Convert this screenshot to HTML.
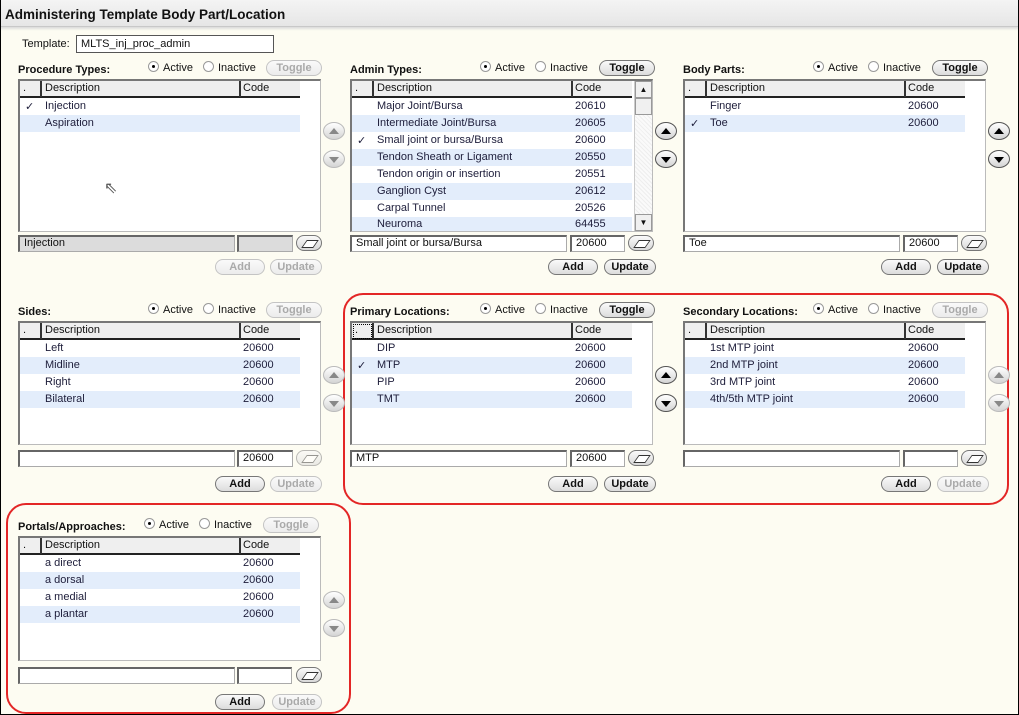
<!DOCTYPE html><html><head><style>
*{box-sizing:border-box;margin:0;padding:0}
body{width:1019px;height:715px;background:#fdfcf2;font-family:"Liberation Sans",sans-serif;font-size:11px;color:#111;position:relative;overflow:hidden}
.frame{position:absolute;left:0;top:0;width:1019px;height:715px;border:1px solid #000;border-top:none}
.tb{position:absolute;left:0;top:0;width:1019px;height:27px;background:linear-gradient(#f4f4f4,#e6e6e6);border-bottom:1px solid #c8c8c8;box-shadow:0 2px 2px #ddd;font-weight:bold;font-size:13.5px;padding:7px 5px;border-right:1px solid #000}
.a{position:absolute}
.p{position:absolute}
.lbl{position:absolute;top:-15px;left:0;font-weight:bold;font-size:11px;white-space:nowrap}
.rad{position:absolute;top:-18px;font-size:11px;white-space:nowrap}
.rad i{display:inline-block;width:11px;height:11px;border-radius:50%;border:1px solid #999;background:#fff;vertical-align:-1px;margin-right:4px;position:relative}
.rad i.on:after{content:"";position:absolute;left:3px;top:3px;width:3px;height:3px;border-radius:50%;background:#000}
.btn{position:absolute;height:16px;border:1px solid #777;border-radius:8px;background:linear-gradient(#fafafa,#dcdcdc);font-weight:bold;font-size:11px;text-align:center;line-height:14px;color:#111}
.btn.d{border-color:#c4c4c4;color:#aaa;background:linear-gradient(#fafafa,#ececec)}
.list{position:absolute;left:0;top:0;width:303px;background:#fff;border:1px solid #bbb;border-left:2px solid #777;border-top:2px solid #777}
.hd{position:absolute;left:0;top:0;height:17px;width:280px;background:#efefef;border-bottom:2px solid #222}
.hd span{position:absolute;top:1px;font-size:11px}
.hd b{position:absolute;top:0;width:2px;height:16px;background:#333}
.row{position:absolute;left:0;height:17px;width:280px;font-size:11px;color:#1d1d3a}
.row.z{background:#e3edfb}
.row span{position:absolute;top:2px}
.inp{position:absolute;height:17px;background:#fff;border:1px solid #aaa;border-left:2px solid #666;border-top:2px solid #666;font-size:11px;padding-left:4px;line-height:13px}
.inp.g{background:#dcdcdc}
.er{position:absolute;width:26px;height:16px;border:1px solid #777;border-radius:8px;background:linear-gradient(#fafafa,#d8d8d8)}
.er:after{content:"";position:absolute;left:7px;top:4px;width:10px;height:6px;border:1px solid #333;transform:skewX(-35deg);background:#fff}
.ar{position:absolute;width:22px;height:18px;border:1px solid #555;border-radius:50%;background:linear-gradient(#fff,#d4d4d4)}
.ar.d{border-color:#bbb}
.ar:after{content:"";position:absolute;left:5px;width:0;height:0;border-left:5px solid transparent;border-right:5px solid transparent}
.ar.u:after{top:5px;border-bottom:6px solid #000}
.ar.w:after{top:6px;border-top:6px solid #000}
.ar.d.u:after{border-bottom-color:#888}.ar.d.w:after{border-top-color:#888}
.red{position:absolute;border:2.5px solid #e32626;border-radius:20px}
</style></head><body>
<div class="tb">Administering Template Body Part/Location</div>
<div class="frame"></div>
<div class="a" style="left:22px;top:38px">Template:</div>
<div class="inp" style="left:76px;top:35px;width:198px;height:18px;border:1px solid #555;padding-top:2px">MLTS_inj_proc_admin</div>

<div class="red" style="left:343px;top:293px;width:666px;height:212px"></div>
<div class="red" style="left:6px;top:503px;width:345px;height:211px"></div>

<!-- Procedure Types -->
<div class="p" style="left:18px;top:79px">
<div class="lbl">Procedure Types:</div>
<div class="rad" style="left:130px"><i class="on"></i>Active</div><div class="rad" style="left:185px"><i></i>Inactive</div>
<div class="btn d" style="left:248px;top:-19px;width:56px">Toggle</div>
<div class="list" style="height:153px">
<div class="hd"><span style="left:3px">.</span><b style="left:20px"></b><span style="left:25px">Description</span><b style="left:219px"></b><span style="left:223px">Code</span></div>
<div class="row" style="top:17px"><span style="left:5px">✓</span><span style="left:25px">Injection</span></div>
<div class="row z" style="top:34px"><span style="left:25px">Aspiration</span></div>
</div>
<div class="inp g" style="left:0;top:156px;width:217px">Injection</div>
<div class="inp g" style="left:219px;top:156px;width:56px"></div>
<div class="er" style="left:278px;top:156px"></div>
<div class="btn d" style="left:197px;top:180px;width:50px">Add</div>
<div class="btn d" style="left:252px;top:180px;width:52px">Update</div>
<div class="ar d u" style="left:305px;top:43px"></div><div class="ar d w" style="left:305px;top:71px"></div>
</div>
<div class="a" style="left:104px;top:178px;font-size:16px;color:#555">⇖</div>

<!-- Admin Types -->
<div class="p" style="left:350px;top:79px">
<div class="lbl">Admin Types:</div>
<div class="rad" style="left:130px"><i class="on"></i>Active</div><div class="rad" style="left:185px"><i></i>Inactive</div>
<div class="btn" style="left:249px;top:-19px;width:56px">Toggle</div>
<div class="list" style="height:153px">
<div class="hd"><span style="left:3px">.</span><b style="left:20px"></b><span style="left:25px">Description</span><b style="left:219px"></b><span style="left:223px">Code</span></div>
<div class="row" style="top:17px"><span style="left:25px">Major Joint/Bursa</span><span style="left:223px">20610</span></div>
<div class="row z" style="top:34px"><span style="left:25px">Intermediate Joint/Bursa</span><span style="left:223px">20605</span></div>
<div class="row" style="top:51px"><span style="left:5px">✓</span><span style="left:25px">Small joint or bursa/Bursa</span><span style="left:223px">20600</span></div>
<div class="row z" style="top:68px"><span style="left:25px">Tendon Sheath or Ligament</span><span style="left:223px">20550</span></div>
<div class="row" style="top:85px"><span style="left:25px">Tendon origin or insertion</span><span style="left:223px">20551</span></div>
<div class="row z" style="top:102px"><span style="left:25px">Ganglion Cyst</span><span style="left:223px">20612</span></div>
<div class="row" style="top:119px"><span style="left:25px">Carpal Tunnel</span><span style="left:223px">20526</span></div>
<div class="row z" style="top:136px;height:14px;overflow:hidden"><span style="left:25px;top:1px">Neuroma</span><span style="left:223px;top:1px">64455</span></div>
<div class="a" style="left:282px;top:0;width:18px;height:150px;background:repeating-linear-gradient(45deg,#eee 0 1px,#fafafa 1px 3px);border-left:1px solid #ccc"></div>
<div class="a" style="left:283px;top:0;width:17px;height:17px;background:#f0f0f0;border:1px solid #999;text-align:center;font-size:8px;line-height:15px">▲</div>
<div class="a" style="left:283px;top:17px;width:17px;height:17px;background:#f0f0f0;border:1px solid #999"></div>
<div class="a" style="left:283px;top:133px;width:17px;height:17px;background:#f0f0f0;border:1px solid #999;text-align:center;font-size:8px;line-height:15px">▼</div>
</div>
<div class="inp" style="left:0;top:156px;width:217px">Small joint or bursa/Bursa</div>
<div class="inp" style="left:220px;top:156px;width:55px">20600</div>
<div class="er" style="left:278px;top:156px"></div>
<div class="btn" style="left:198px;top:180px;width:50px">Add</div>
<div class="btn" style="left:254px;top:180px;width:52px">Update</div>
<div class="ar u" style="left:305px;top:43px"></div><div class="ar w" style="left:305px;top:71px"></div>
</div>

<!-- Body Parts -->
<div class="p" style="left:683px;top:79px">
<div class="lbl">Body Parts:</div>
<div class="rad" style="left:130px"><i class="on"></i>Active</div><div class="rad" style="left:185px"><i></i>Inactive</div>
<div class="btn" style="left:249px;top:-19px;width:56px">Toggle</div>
<div class="list" style="height:153px">
<div class="hd"><span style="left:3px">.</span><b style="left:20px"></b><span style="left:25px">Description</span><b style="left:219px"></b><span style="left:223px">Code</span></div>
<div class="row" style="top:17px"><span style="left:25px">Finger</span><span style="left:223px">20600</span></div>
<div class="row z" style="top:34px"><span style="left:5px">✓</span><span style="left:25px">Toe</span><span style="left:223px">20600</span></div>
</div>
<div class="inp" style="left:0;top:156px;width:217px">Toe</div>
<div class="inp" style="left:220px;top:156px;width:55px">20600</div>
<div class="er" style="left:278px;top:156px"></div>
<div class="btn" style="left:198px;top:180px;width:50px">Add</div>
<div class="btn" style="left:254px;top:180px;width:52px">Update</div>
<div class="ar u" style="left:305px;top:43px"></div><div class="ar w" style="left:305px;top:71px"></div>
</div>

<!-- Sides -->
<div class="p" style="left:18px;top:321px">
<div class="lbl">Sides:</div>
<div class="rad" style="left:130px"><i class="on"></i>Active</div><div class="rad" style="left:185px"><i></i>Inactive</div>
<div class="btn d" style="left:248px;top:-19px;width:56px">Toggle</div>
<div class="list" style="height:124px">
<div class="hd"><span style="left:3px">.</span><b style="left:20px"></b><span style="left:25px">Description</span><b style="left:219px"></b><span style="left:223px">Code</span></div>
<div class="row" style="top:17px"><span style="left:25px">Left</span><span style="left:223px">20600</span></div>
<div class="row z" style="top:34px"><span style="left:25px">Midline</span><span style="left:223px">20600</span></div>
<div class="row" style="top:51px"><span style="left:25px">Right</span><span style="left:223px">20600</span></div>
<div class="row z" style="top:68px"><span style="left:25px">Bilateral</span><span style="left:223px">20600</span></div>
</div>
<div class="inp" style="left:0;top:129px;width:217px"></div>
<div class="inp" style="left:219px;top:129px;width:56px">20600</div>
<div class="er" style="left:278px;top:129px;opacity:.5"></div>
<div class="btn" style="left:197px;top:155px;width:50px">Add</div>
<div class="btn d" style="left:252px;top:155px;width:52px">Update</div>
<div class="ar d u" style="left:305px;top:45px"></div><div class="ar d w" style="left:305px;top:73px"></div>
</div>

<!-- Primary -->
<div class="p" style="left:350px;top:321px">
<div class="lbl">Primary Locations:</div>
<div class="rad" style="left:130px"><i class="on"></i>Active</div><div class="rad" style="left:185px"><i></i>Inactive</div>
<div class="btn" style="left:249px;top:-19px;width:56px">Toggle</div>
<div class="list" style="height:124px">
<div class="hd"><span style="left:3px">.</span><b style="left:20px"></b><span style="left:25px">Description</span><b style="left:219px"></b><span style="left:223px">Code</span><i style="position:absolute;left:1px;top:1px;width:19px;height:15px;border:1px dotted #000"></i></div>
<div class="row" style="top:17px"><span style="left:25px">DIP</span><span style="left:223px">20600</span></div>
<div class="row z" style="top:34px"><span style="left:5px">✓</span><span style="left:25px">MTP</span><span style="left:223px">20600</span></div>
<div class="row" style="top:51px"><span style="left:25px">PIP</span><span style="left:223px">20600</span></div>
<div class="row z" style="top:68px"><span style="left:25px">TMT</span><span style="left:223px">20600</span></div>
</div>
<div class="inp" style="left:0;top:129px;width:217px">MTP</div>
<div class="inp" style="left:220px;top:129px;width:55px">20600</div>
<div class="er" style="left:278px;top:129px"></div>
<div class="btn" style="left:198px;top:155px;width:50px">Add</div>
<div class="btn" style="left:254px;top:155px;width:52px">Update</div>
<div class="ar u" style="left:305px;top:45px"></div><div class="ar w" style="left:305px;top:73px"></div>
</div>

<!-- Secondary -->
<div class="p" style="left:683px;top:321px">
<div class="lbl">Secondary Locations:</div>
<div class="rad" style="left:130px"><i class="on"></i>Active</div><div class="rad" style="left:185px"><i></i>Inactive</div>
<div class="btn d" style="left:249px;top:-19px;width:56px">Toggle</div>
<div class="list" style="height:124px">
<div class="hd"><span style="left:3px">.</span><b style="left:20px"></b><span style="left:25px">Description</span><b style="left:219px"></b><span style="left:223px">Code</span></div>
<div class="row" style="top:17px"><span style="left:25px">1st MTP joint</span><span style="left:223px">20600</span></div>
<div class="row z" style="top:34px"><span style="left:25px">2nd MTP joint</span><span style="left:223px">20600</span></div>
<div class="row" style="top:51px"><span style="left:25px">3rd MTP joint</span><span style="left:223px">20600</span></div>
<div class="row z" style="top:68px"><span style="left:25px">4th/5th MTP joint</span><span style="left:223px">20600</span></div>
</div>
<div class="inp" style="left:0;top:129px;width:217px"></div>
<div class="inp" style="left:220px;top:129px;width:55px"></div>
<div class="er" style="left:278px;top:129px"></div>
<div class="btn" style="left:198px;top:155px;width:50px">Add</div>
<div class="btn d" style="left:254px;top:155px;width:52px">Update</div>
<div class="ar d u" style="left:305px;top:45px"></div><div class="ar d w" style="left:305px;top:73px"></div>
</div>

<!-- Portals -->
<div class="p" style="left:18px;top:536px">
<div class="lbl">Portals/Approaches:</div>
<div class="rad" style="left:126px"><i class="on"></i>Active</div><div class="rad" style="left:181px"><i></i>Inactive</div>
<div class="btn d" style="left:245px;top:-19px;width:56px">Toggle</div>
<div class="list" style="height:125px">
<div class="hd"><span style="left:3px">.</span><b style="left:20px"></b><span style="left:25px">Description</span><b style="left:219px"></b><span style="left:223px">Code</span></div>
<div class="row" style="top:17px"><span style="left:25px">a direct</span><span style="left:223px">20600</span></div>
<div class="row z" style="top:34px"><span style="left:25px">a dorsal</span><span style="left:223px">20600</span></div>
<div class="row" style="top:51px"><span style="left:25px">a medial</span><span style="left:223px">20600</span></div>
<div class="row z" style="top:68px"><span style="left:25px">a plantar</span><span style="left:223px">20600</span></div>
</div>
<div class="inp" style="left:0;top:131px;width:217px"></div>
<div class="inp" style="left:219px;top:131px;width:55px"></div>
<div class="er" style="left:278px;top:131px"></div>
<div class="btn" style="left:197px;top:158px;width:50px">Add</div>
<div class="btn d" style="left:254px;top:158px;width:50px">Update</div>
<div class="ar d u" style="left:305px;top:55px"></div><div class="ar d w" style="left:305px;top:83px"></div>
</div>
</body></html>
